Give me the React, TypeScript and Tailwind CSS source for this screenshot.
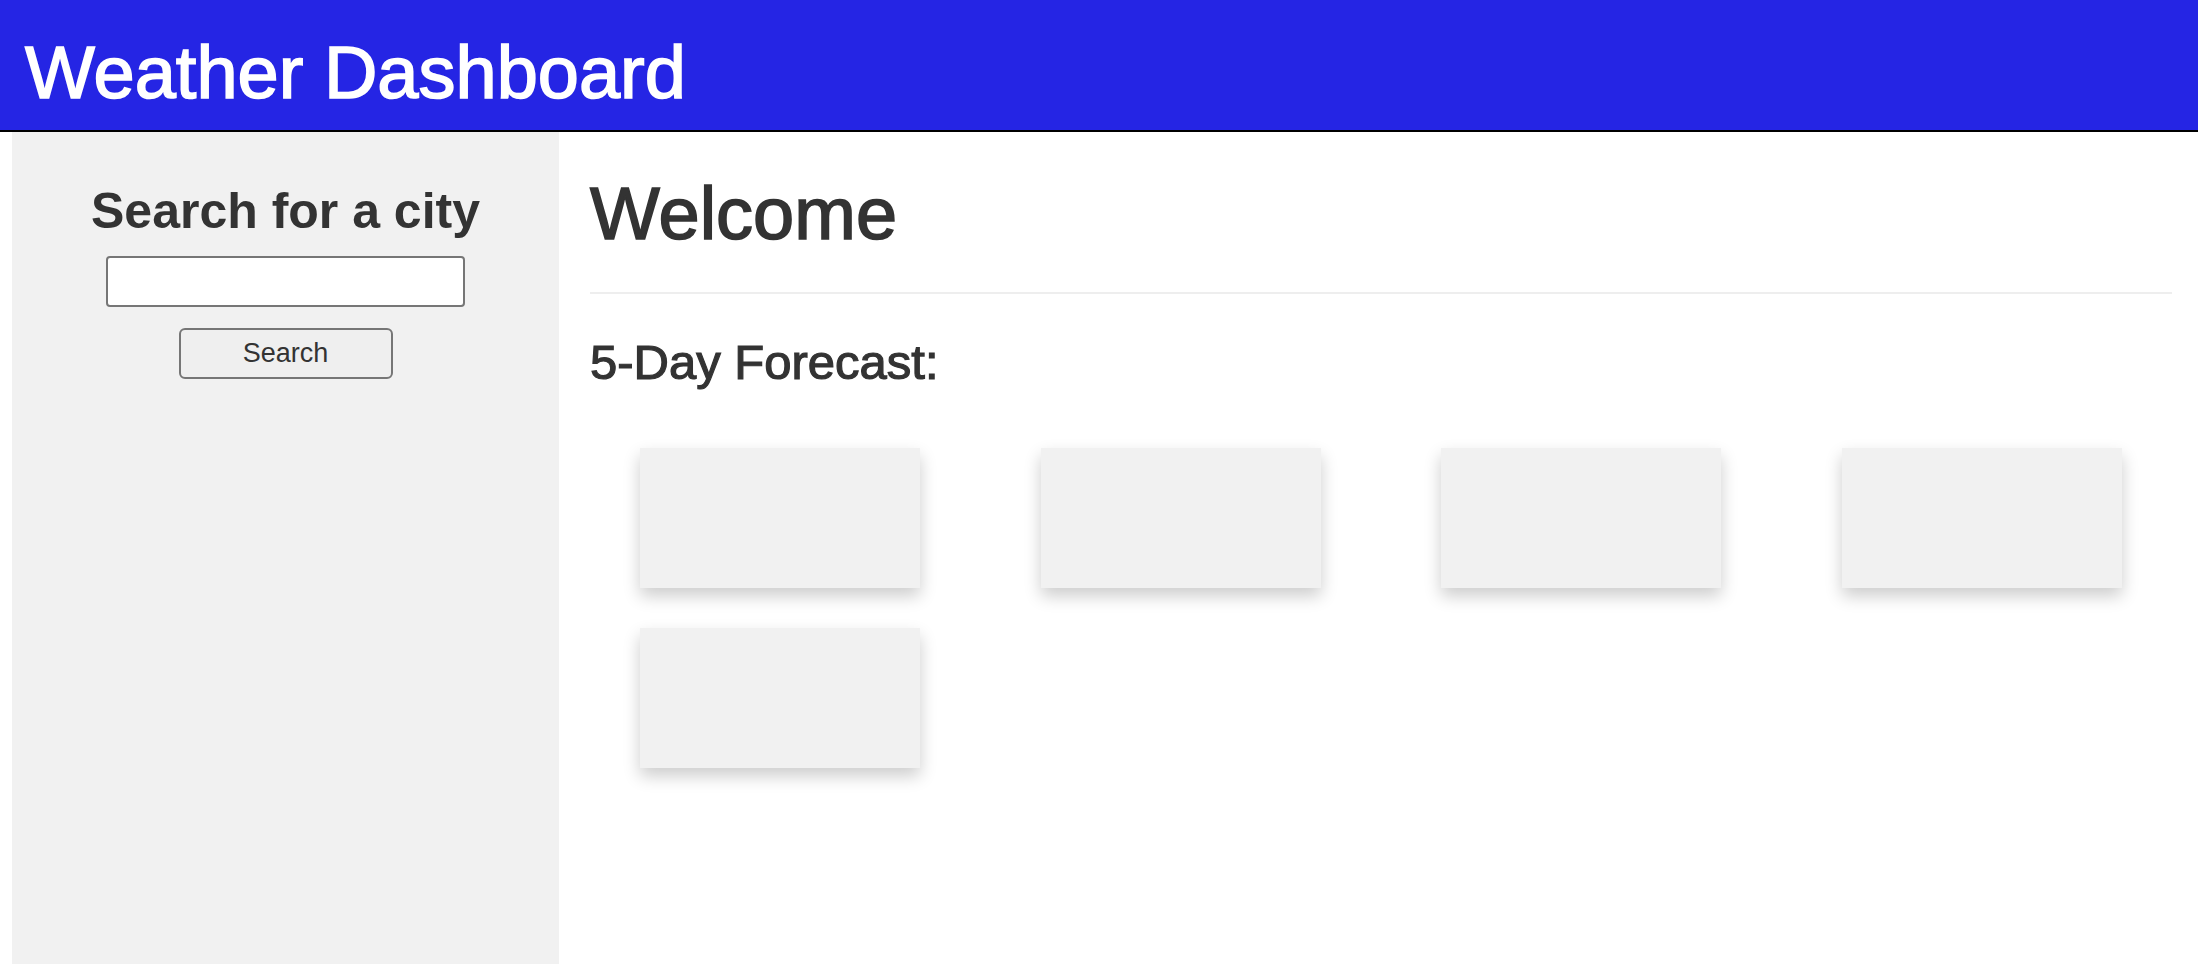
import React from "react";

export default function App() {
  const cards = [0, 1, 2, 3, 4];
  return (
    <div
      className="min-h-screen flex flex-col bg-white text-[#333]"
      style={{ fontFamily: '"Liberation Sans", Arial, Helvetica, sans-serif' }}
    >
      <header className="h-[132px] shrink-0 bg-[#2525e4] border-b-2 border-black pl-[25px] pt-[36px]">
        <h1 className="text-[74px] leading-none text-white font-normal [-webkit-text-stroke:1.6px_white]">
          Weather Dashboard
        </h1>
      </header>
      <div className="flex flex-1">
        <aside className="ml-[12px] w-[547px] shrink-0 bg-[#f1f1f1] flex flex-col items-center pt-[54px]">
          <h2 className="text-[50px] leading-none font-bold text-[#333]">Search for a city</h2>
          <input
            type="text"
            className="mt-[20px] w-[359px] h-[51px] bg-white border-2 border-[#767676] rounded-[4px] outline-none"
          />
          <button className="mt-[21px] w-[214px] h-[51px] bg-[#efefef] border-2 border-[#767676] rounded-[6px] text-[27px] leading-none text-[#333]">
            Search
          </button>
        </aside>
        <main className="flex-1 pl-[31px] pr-[26px] pt-[45px]">
          <h1 className="text-[74px] leading-none font-normal text-[#333] [-webkit-text-stroke:1.6px_#333]">
            Welcome
          </h1>
          <hr className="mt-[41px] border-0 border-t-2 border-[#eeeeee]" />
          <h2 className="mt-[44px] text-[49px] leading-none font-normal text-[#333] [-webkit-text-stroke:1.2px_#333]">
            5-Day Forecast:
          </h2>
          <div className="mt-[61px] ml-[50px] grid grid-cols-[repeat(4,280px)] gap-x-[120.5px] gap-y-[40px]">
            {cards.map((c) => (
              <div
                key={c}
                className="w-[280px] h-[140px] bg-[#f1f1f1] shadow-[0_8px_16px_0_rgba(0,0,0,0.2)]"
              />
            ))}
          </div>
        </main>
      </div>
    </div>
  );
}
